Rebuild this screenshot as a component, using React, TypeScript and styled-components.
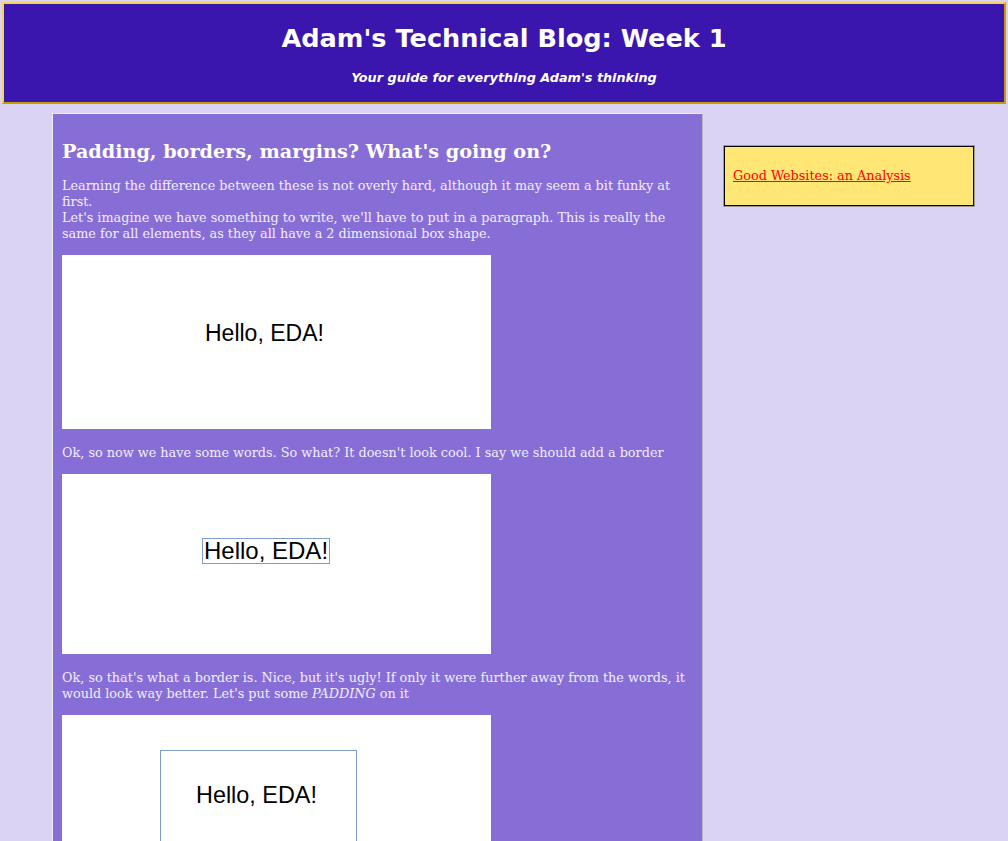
import React from "react";
import styled, { createGlobalStyle } from "styled-components";

const Global = createGlobalStyle`
  html, body { margin: 0; padding: 0; }
  body {
    background: #dad3f3;
    font-family: "DejaVu Serif", serif;
    overflow: hidden;
  }
`;

const Header = styled.header`
  margin: 2px 2px 0;
  border: 2px solid;
  border-color: #f3d64e #c79c00 #c79c00 #f3d64e;
  background: #3a15ae;
  color: #ffffff;
  text-align: center;
  padding: 19px 0 16px;
  font-family: "DejaVu Sans", sans-serif;
`;

const Title = styled.h1`
  margin: 0;
  font-size: 25.6px;
  line-height: 30px;
  font-weight: bold;
`;

const Subtitle = styled.p`
  margin: 17px 0 0;
  font-size: 12.8px;
  line-height: 16px;
  font-weight: bold;
  font-style: italic;
`;

const Row = styled.div`
  display: flex;
  align-items: flex-start;
  margin-top: 9px;
`;

const Main = styled.main`
  box-sizing: border-box;
  width: 651px;
  margin-left: 52px;
  background: #876dd6;
  border: 1px solid;
  border-color: #eeeeee #b8b8b8 #b8b8b8 #eeeeee;
  padding: 0 9px 20px;
  color: #f3eeff;
  min-height: 760px;
`;

const Heading = styled.h2`
  margin: 26px 0 14px;
  font-size: 19.2px;
  line-height: 24px;
  font-weight: bold;
  color: #ffffff;
`;

const Para = styled.p`
  margin: 0 0 13px;
  font-size: 12.8px;
  line-height: 16px;
`;

const Demo = styled.div<{ $h: number; $top: number; $left: number }>`
  width: 429px;
  height: ${(p) => p.$h}px;
  background: #ffffff;
  margin: 0 0 16px;
  display: flex;
  align-items: flex-start;
  justify-content: flex-start;
  padding: ${(p) => `${p.$top}px 0 0 ${p.$left}px`};
  box-sizing: border-box;
  overflow: hidden;
`;

const Hello = styled.span<{ $size: number; $border?: boolean; $pad?: string }>`
  font-family: "Liberation Sans", Arial, sans-serif;
  font-size: ${(p) => p.$size}px;
  color: #000;
  line-height: 1;
  border: ${(p) => (p.$border ? "1px solid #7d9bcb" : "none")};
  padding: ${(p) => p.$pad || "0"};
`;

const Side = styled.aside`
  box-sizing: border-box;
  width: 250px;
  height: 60px;
  margin: 33px 0 0 21px;
  background: #ffe675;
  border: 1px solid #000;
  box-shadow: 0 0 0 1px #9a9a9a;
  display: flex;
  align-items: center;
  padding: 0 8px 1px;
`;

const SideLink = styled.a`
  color: #ff0000;
  font-size: 12.8px;
  text-decoration: underline;
  font-family: "DejaVu Serif", serif;
`;

export default function App() {
  return (
    <>
      <Global />
      <Header>
        <Title>Adam's Technical Blog: Week 1</Title>
        <Subtitle>Your guide for everything Adam's thinking</Subtitle>
      </Header>
      <Row>
        <Main>
          <Heading>Padding, borders, margins? What's going on?</Heading>
          <Para>
            Learning the difference between these is not overly hard, although it may seem a bit funky at first.
            <br />
            Let's imagine we have something to write, we'll have to put in a paragraph. This is really the same
            for all elements, as they all have a 2 dimensional box shape.
          </Para>
          <Demo $h={174} $top={67} $left={143}>
            <Hello $size={23}>Hello, EDA!</Hello>
          </Demo>
          <Para>Ok, so now we have some words. So what? It doesn't look cool. I say we should add a border</Para>
          <Demo $h={180} $top={64} $left={140}>
            <Hello $size={24} $border $pad="0 1px">Hello, EDA!</Hello>
          </Demo>
          <Para>
            Ok, so that's what a border is. Nice, but it's ugly! If only it were further away from the words, it
            would look way better. Let's put some <em>PADDING</em> on it
          </Para>
          <Demo $h={180} $top={35} $left={98}>
            <Hello $size={23.4} $border $pad="33px 39px 34px 35px">Hello, EDA!</Hello>
          </Demo>
        </Main>
        <Side>
          <SideLink href="#">Good Websites: an Analysis</SideLink>
        </Side>
      </Row>
    </>
  );
}
